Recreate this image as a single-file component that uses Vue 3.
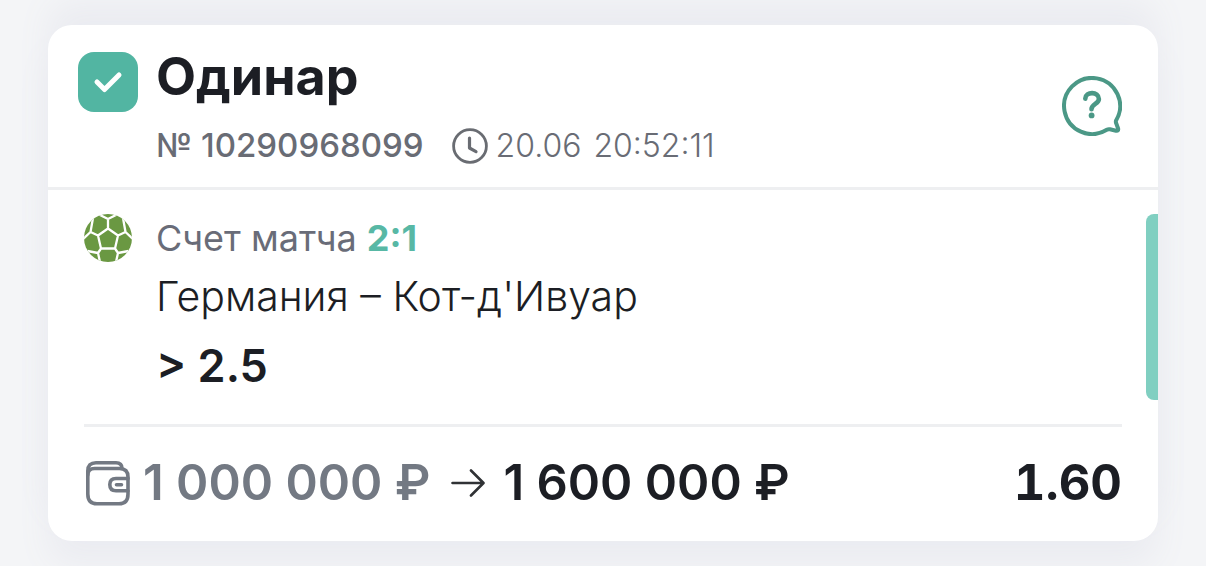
<script setup>
const bet = {
  type: 'Одинар',
  number: '№ 10290968099',
  date: '20.06',
  time: '20:52:11',
  scoreLabel: 'Счет матча',
  score: '2:1',
  match: "Германия – Кот-д'Ивуар",
  outcome: '> 2.5',
  stake: '1 000 000 ₽',
  payout: '1 600 000 ₽',
  odds: '1.60',
}
</script>

<template>
  <main class="page">
    <article class="card">
      <header class="head">
        <label class="tick">
          <input type="checkbox" checked :aria-label="bet.type" />
          <svg viewBox="0 0 60 60" aria-hidden="true">
            <path d="M19 30 L26.500 37.500 L41 23" fill="none" stroke="#fff" stroke-width="5" stroke-linecap="round" stroke-linejoin="round" />
          </svg>
        </label>
        <div class="heading">
          <h1>{{ bet.type }}</h1>
          <p class="meta">
            <span class="number">{{ bet.number }}</span>
            <svg class="clock" viewBox="0 0 36 36" fill="none" stroke="#696c72" stroke-width="2.800" stroke-linecap="round" stroke-linejoin="round" aria-hidden="true">
              <circle cx="18" cy="18" r="16.400" />
              <path d="M17.500 10v10l6.500 3.600" stroke-width="3.200" />
            </svg>
            <time>{{ bet.date }}</time>
            <time class="hours">{{ bet.time }}</time>
          </p>
        </div>
        <button class="help" type="button" aria-label="Помощь">
          <svg viewBox="0 0 60 60" fill="none" stroke="#4b9886" stroke-width="4" stroke-linecap="round" stroke-linejoin="round" aria-hidden="true">
            <path d="M54.200 44.200 A28 28 0 1 0 44.800 53.800 Q46.300 52.900 48 53.300 L54 54.700 Q56.700 55.200 56.100 52.500 L54 46.800 Q53.600 45.500 54.200 44.200Z" />
            <path d="M23.300 22.600 C23.600 15.200 36.700 15.200 36.900 23 C37 27.800 29.500 28.200 29.500 33.200" stroke-width="4.600" />
            <circle cx="29.600" cy="39.400" r="2.900" fill="#4b9886" stroke="none" />
          </svg>
        </button>
      </header>

      <section class="event">
        <svg class="ball" viewBox="0 0 48 48" aria-hidden="true">
          <defs>
            <clipPath id="ball-edge"><circle cx="24" cy="24" r="24" /></clipPath>
          </defs>
          <g clip-path="url(#ball-edge)">
            <rect width="48" height="48" fill="#6a9842" />
            <path
              fill="none"
              stroke="#fff"
              stroke-width="2.300"
              stroke-linejoin="round"
              d="M24 14.500 L34 21.500 L31 34.500 H17 L14 21.500 Z
                 M24 14.500 V5 M24 5 L14 0 M24 5 L34 0
                 M34 21.500 L41.500 18 M41.500 18 L39 4 M41.500 18 L49 25
                 M14 21.500 L6.500 18 M6.500 18 L9 4 M6.500 18 L-1 25
                 M31 34.500 L34 39 M34 39 L44.500 37 M34 39 L32 48
                 M17 34.500 L14 39 M14 39 L3.500 37 M14 39 L16 48"
            />
          </g>
        </svg>
        <div class="details">
          <p class="result">{{ bet.scoreLabel }} <strong>{{ bet.score }}</strong></p>
          <p class="match">{{ bet.match }}</p>
          <p class="outcome">{{ bet.outcome }}</p>
        </div>
        <span class="marker"></span>
      </section>

      <footer class="sums">
        <svg class="wallet" viewBox="0 0 46 46" fill="none" stroke="#737983" stroke-width="3.600" stroke-linecap="round" stroke-linejoin="round" aria-hidden="true">
          <path d="M43 18.500 V17 Q43 8.500 34.500 8.500 H9.500 Q2.800 8.500 2.800 15 V34 Q2.800 43.800 12 43.800 H34 Q43 43.800 43 34 V31" />
          <path d="M2.800 15 V11 Q2.800 2.800 11 2.800 H31 Q37 2.800 37 8.500" />
          <path d="M43 18.500 H31 Q24.800 18.500 24.800 24.600 Q24.800 30.800 31 30.800 H43 Z" />
          <path d="M31.500 24.700 H36.500" />
        </svg>
        <span class="stake">{{ bet.stake }}</span>
        <svg class="arrow" viewBox="0 0 34 30" fill="none" stroke="#303235" stroke-width="2.600" stroke-linecap="round" stroke-linejoin="round" aria-hidden="true">
          <path d="M1.500 15 H32 M20 2.500 L32.500 15 L20 27.500" />
        </svg>
        <span class="payout">{{ bet.payout }}</span>
        <span class="odds">{{ bet.odds }}</span>
      </footer>
    </article>
  </main>
</template>

<style>
body {
  margin: 0;
  background: #f4f5f7;
}
</style>

<style scoped>
.page {
  padding: 25px 48px;
  overflow: hidden;
  font-family: Inter, "Open Sans", sans-serif;
  color: #1c1e24;
}

h1,
p {
  margin: 0;
}

svg {
  display: block;
}

.card {
  border-radius: 24px;
  background: #fff;
  box-shadow: 0 -24px 32px #ebecf1, 0 24px 32px #ebecf1;
}

.head {
  display: flex;
  align-items: flex-start;
  padding: 24px 36px 21px 30px;
  border-bottom: 3px solid #eeeff1;
}

.tick {
  display: grid;
  flex: none;
  margin: 3px 18px 0 0;
}

.tick input,
.tick svg {
  grid-area: 1 / 1;
  width: 60px;
  height: 60px;
  margin: 0;
}

.tick input {
  appearance: none;
  border-radius: 16px;
  background: #52b5a2;
}

.tick svg {
  z-index: 1;
  pointer-events: none;
}

.heading {
  flex: 1;
}

h1 {
  font-size: 52px;
  font-weight: 700;
  line-height: 56px;
}

.meta {
  display: flex;
  align-items: center;
  margin-top: 20px;
  font-size: 33px;
  line-height: 41px;
  color: #696c75;
}

.number {
  font-weight: 500;
}

.clock {
  width: 36px;
  height: 36px;
  margin: 0 8px 0 28px;
}

.meta time {
  font-size: 32px;
  font-weight: 300;
}

.hours {
  margin-left: 12px;
}

.help {
  width: 60px;
  height: 60px;
  margin-top: 27px;
  padding: 0;
  border: 0;
  background: none;
}

.event {
  display: grid;
  grid-template-columns: 48px 1fr 12px;
  column-gap: 24px;
  padding: 24px 0 24px 36px;
}

.ball {
  width: 48px;
  height: 48px;
}

.details {
  padding-bottom: 6px;
}

.result {
  font-size: 36px;
  line-height: 48px;
  color: #696c78;
}

.result strong {
  font-weight: 700;
  color: #58b8a5;
}

.match {
  margin-top: 10px;
  font-size: 41px;
  font-weight: 300;
  line-height: 48px;
}

.outcome {
  margin-top: 18px;
  font-size: 45px;
  font-weight: 600;
  line-height: 56px;
}

.marker {
  border-radius: 8px 0 0 8px;
  background: #80cfc1;
}

.sums {
  display: flex;
  align-items: center;
  margin: 0 36px;
  padding: 28px 0 30px;
  border-top: 3px solid #eeeff1;
  font-size: 49px;
  font-weight: 600;
  line-height: 56px;
}

.wallet {
  width: 46px;
  height: 46px;
  margin: 0 12px 0 1px;
}

.stake {
  color: #737983;
}

.arrow {
  width: 34px;
  height: 30px;
  margin: 0 18px 0 21px;
}

.odds {
  margin-left: auto;
  font-weight: 700;
  font-variant-numeric: tabular-nums;
}
</style>
